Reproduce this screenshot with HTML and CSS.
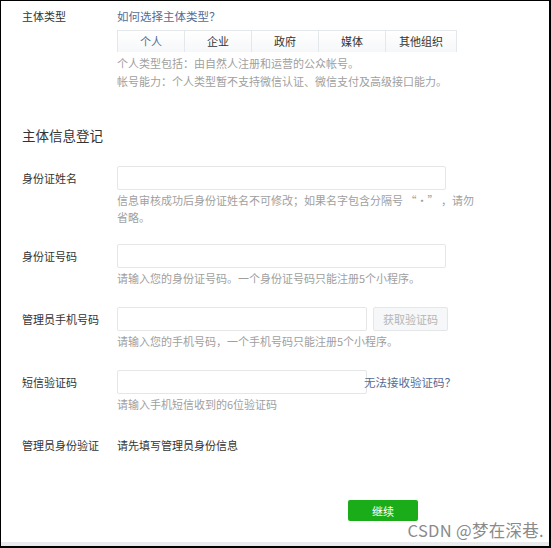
FILE: index.html
```html
<!DOCTYPE html>
<html lang="zh-CN">
<head>
  <meta charset="UTF-8">
  <meta name="viewport" content="width=device-width, initial-scale=1.0">
  <title>主体信息登记</title>
  <link rel="stylesheet" href="styles.css">
</head>
<body>
  <div class="frame">
    <div class="row row-type">
      <div class="label">主体类型</div>
      <div class="field">
        <a class="link" href="#">如何选择主体类型？</a>
        <div class="tabs">
          <span class="tab active">个人</span>
          <span class="tab">企业</span>
          <span class="tab">政府</span>
          <span class="tab">媒体</span>
          <span class="tab tab-wide">其他组织</span>
        </div>
        <p class="tips">个人类型包括：由自然人注册和运营的公众帐号。</p>
        <p class="tips">帐号能力：个人类型暂不支持微信认证、微信支付及高级接口能力。</p>
      </div>
    </div>

    <h2 class="section-title">主体信息登记</h2>

    <div class="row row-name">
      <div class="label">身份证姓名</div>
      <div class="field">
        <input class="input" type="text">
        <p class="tips tips-wrap">信息审核成功后身份证姓名不可修改；如果名字包含分隔号 “·” ，请勿省略。</p>
      </div>
    </div>

    <div class="row row-id">
      <div class="label">身份证号码</div>
      <div class="field">
        <input class="input" type="text">
        <p class="tips">请输入您的身份证号码。一个身份证号码只能注册5个小程序。</p>
      </div>
    </div>

    <div class="row row-phone">
      <div class="label">管理员手机号码</div>
      <div class="field">
        <div class="inline">
          <input class="input input-short" type="text">
          <button class="btn-code" type="button">获取验证码</button>
        </div>
        <p class="tips">请输入您的手机号码，一个手机号码只能注册5个小程序。</p>
      </div>
    </div>

    <div class="row row-sms">
      <div class="label">短信验证码</div>
      <div class="field">
        <div class="inline">
          <input class="input input-short" type="text">
          <a class="link link-side" href="#">无法接收验证码？</a>
        </div>
        <p class="tips">请输入手机短信收到的6位验证码</p>
      </div>
    </div>

    <div class="row row-admin">
      <div class="label">管理员身份验证</div>
      <div class="field value">请先填写管理员身份信息</div>
    </div>

    <div class="actions">
      <button class="btn-primary" type="button">继续</button>
    </div>

    <div class="watermark">CSDN @梦在深巷.</div>
  </div>
</body>
</html>
```

FILE: styles.css
```css
* {
  box-sizing: border-box;
}

body {
  margin: 0;
  padding: 0;
  background-color: #fff;
  font-family: "Noto Sans CJK SC", "Noto Sans", sans-serif;
  font-size: 11px;
  color: #333;
}

.frame {
  position: relative;
  width: 551px;
  height: 548px;
  border: 1px solid #000;
  border-right-width: 2px;
  border-bottom-width: 2px;
  padding: 7px 0 0 21px;
  overflow: hidden;
}

.frame::after {
  content: "";
  position: absolute;
  left: 0;
  right: 0;
  bottom: 0;
  height: 4px;
  background-color: #e9ebee;
}

.row {
  display: grid;
  grid-template-columns: 95px 1fr;
  align-items: start;
}

.label {
  line-height: 24px;
  color: #333;
}

.row-type .label {
  line-height: 16px;
}

.field {
  width: 340px;
}

.link {
  color: #576b95;
  text-decoration: none;
  font-size: 11.5px;
  line-height: 16px;
}

.tabs {
  display: flex;
  margin-top: 6px;
  width: 340px;
  border-top: 1px solid #e4e8eb;
  background: linear-gradient(#fff, #f6f7f9);
}

.tab {
  width: 67px;
  height: 21px;
  line-height: 20px;
  text-align: center;
  border-left: 1px solid #e4e8eb;
  color: #333;
}

.tab:last-child {
  border-right: 1px solid #e4e8eb;
}

.tab.active {
  color: #576b95;
}

.tab-wide {
  width: 72px;
}

.tips {
  margin: 0;
  color: #a0a0a0;
  line-height: 17px;
}

.row-type .tips {
  line-height: 16px;
}

.row-type .tips:first-of-type {
  margin-top: 3px;
}

.tips-wrap {
  width: 366px;
}

.section-title {
  margin: 36px 0 0;
  font-size: 13.5px;
  font-weight: normal;
  line-height: 20px;
  color: #333;
}

.input {
  display: block;
  width: 329px;
  height: 24px;
  border: 1px solid #e4e6e8;
  border-radius: 2px;
  background-color: #fff;
  margin: 0;
}

.row .tips {
  margin-top: 2px;
}

.row-name {
  margin-top: 21px;
}

.row-id {
  margin-top: 18px;
}

.row-phone {
  margin-top: 20px;
}

.row-sms {
  margin-top: 20px;
}

.row-admin {
  margin-top: 20px;
}

.inline {
  display: flex;
  align-items: center;
  width: 340px;
}

.input-short {
  width: 250px;
}

.btn-code {
  margin-left: 6px;
  width: 75px;
  height: 24px;
  border: 1px solid #e4e6e8;
  border-radius: 2px;
  background-color: #f6f7f8;
  color: #b5b5b5;
  font-family: inherit;
  font-size: 11px;
  padding: 0;
}

.link-side {
  margin-left: -3px;
}

.value {
  line-height: 24px;
}

.actions {
  margin-top: 43px;
  padding-left: 326px;
}

.btn-primary {
  width: 70px;
  height: 21px;
  border: 0;
  border-radius: 2px;
  background-color: #1aad19;
  color: #fff;
  font-family: inherit;
  font-size: 11px;
  padding: 0;
}

.watermark {
  position: absolute;
  right: 5px;
  bottom: 7px;
  font-size: 16.5px;
  line-height: 18px;
  color: #8a8a8a;
  letter-spacing: 0.3px;
}
```
